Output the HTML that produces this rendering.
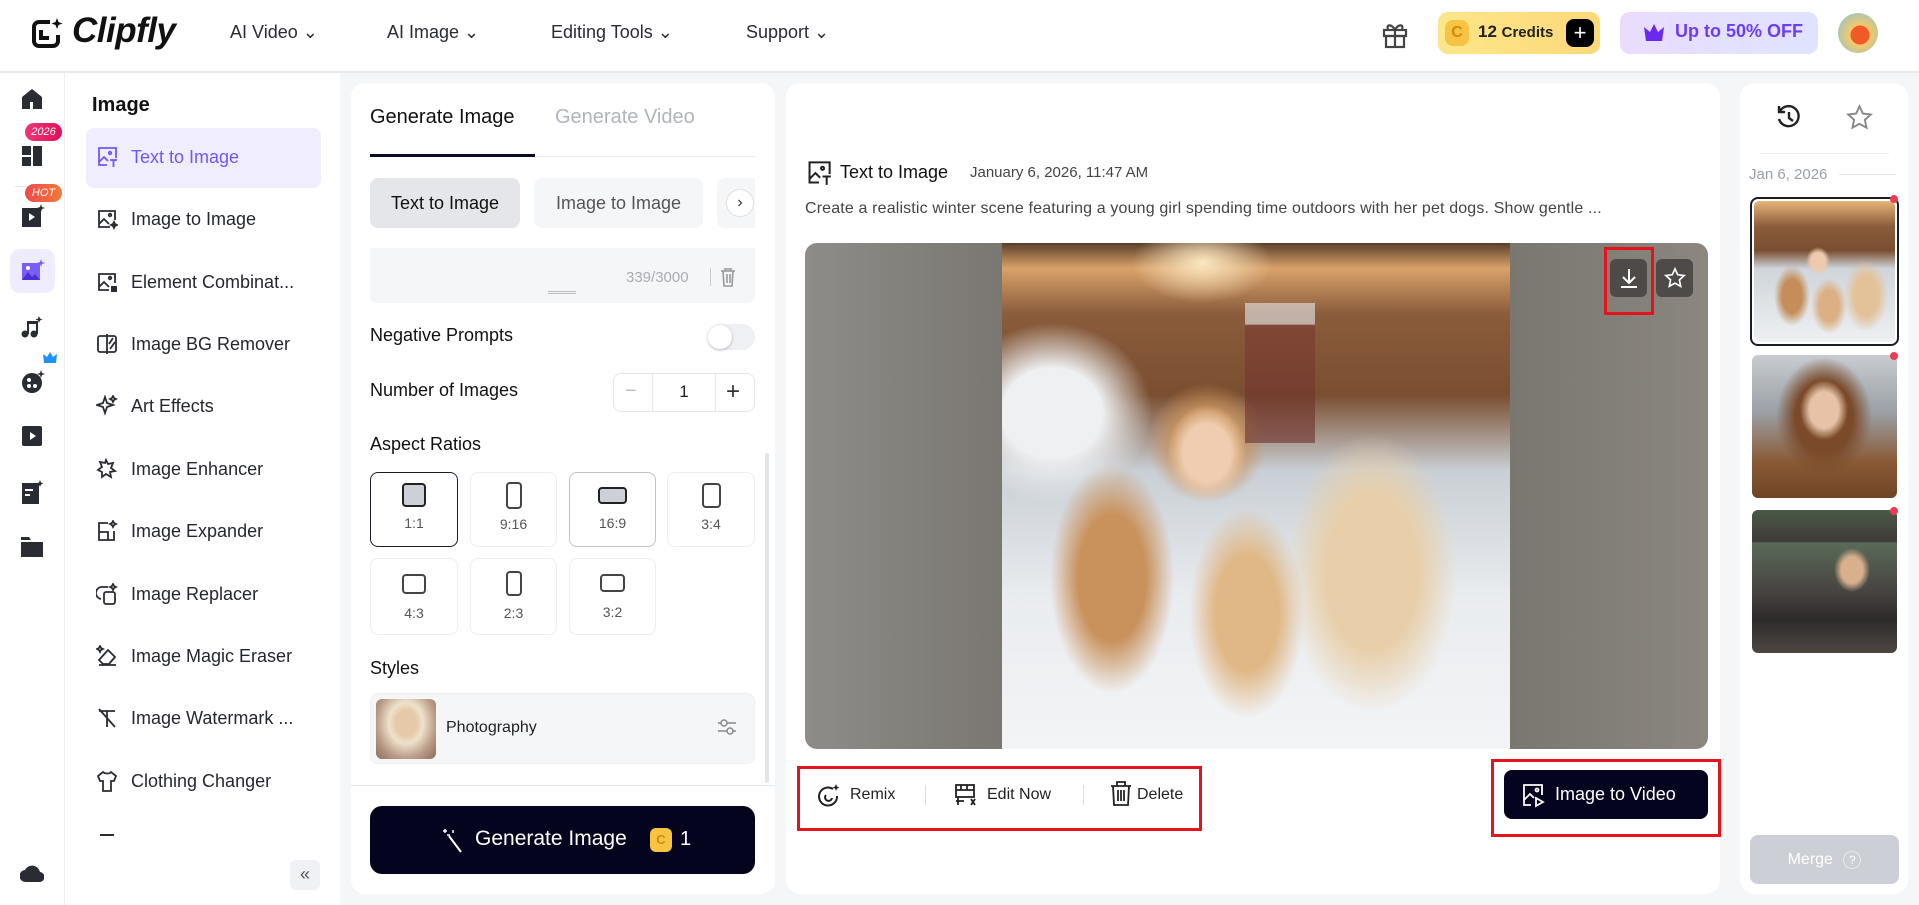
<!DOCTYPE html>
<html><head><meta charset="utf-8"><style>
*{box-sizing:border-box;margin:0;padding:0}
body{width:1919px;height:905px;overflow:hidden;background:#f5f6f8;font-family:"Liberation Sans",sans-serif;color:#1f2129;position:relative}
.a{position:absolute}
.hdr{left:0;top:0;width:1919px;height:73px;background:#fff;border-bottom:2px solid #e8e9ec}
.nav{font-size:18px;color:#2a2c33;top:22px}
.rail{left:0;top:73px;width:65px;height:832px;background:#fff;border-right:1px solid #eceef1}
.side{left:65px;top:73px;width:275px;height:832px;background:#fff}
.it{left:96px;font-size:18px;color:#25272e;display:flex;align-items:center;gap:13px;height:30px}
.it svg{width:22px;height:22px}
.card{background:#fff;border-radius:14px}
.rb{border:1px solid #eceef1;border-radius:8px;background:#fff;display:flex;flex-direction:column;align-items:center;font-size:14px;color:#555}
.red{border:3px solid #e5141c}
</style></head><body>
<div class="a hdr"></div>
<svg class="a" style="left:30px;top:16px" width="34" height="34" viewBox="0 0 34 34"><path d="M20 6H9a5 5 0 0 0-5 5v14a5 5 0 0 0 5 5h14a5 5 0 0 0 5-5v-6" fill="none" stroke="#111" stroke-width="4"/><path d="M11 14v8h8" fill="none" stroke="#111" stroke-width="4"/><path d="M27 2l1.5 4 4 1.5-4 1.5L27 13l-1.5-4-4-1.5 4-1.5z" fill="#111"/></svg>
<div class="a" style="left:72px;top:11px;font-size:35px;font-weight:bold;font-style:italic;color:#111;letter-spacing:-0.5px">Clipfly</div>
<div class="a nav" style="left:230px">AI Video ⌄</div>
<div class="a nav" style="left:387px">AI Image ⌄</div>
<div class="a nav" style="left:551px">Editing Tools ⌄</div>
<div class="a nav" style="left:746px">Support ⌄</div>
<svg class="a" style="left:1380px;top:19px" width="30" height="30" viewBox="0 0 30 30" fill="none" stroke="#444" stroke-width="2.2"><rect x="4" y="11" width="22" height="6"/><rect x="6" y="17" width="18" height="11"/><path d="M15 11v17M15 11c-3-6-9-6-7-1M15 11c3-6 9-6 7-1"/></svg>
<div class="a" style="left:1438px;top:12px;width:162px;height:42px;border-radius:10px;background:linear-gradient(90deg,#fde68a,#fcd97a)"></div>
<div class="a" style="left:1445px;top:20px;width:24px;height:26px;border-radius:8px;background:#f6c342;color:#d08a10;font-weight:bold;font-size:16px;text-align:center;line-height:26px">C</div>
<div class="a" style="left:1478px;top:22px;font-size:17px;color:#222;font-weight:bold">12 <span style="font-size:15px">Credits</span></div>
<div class="a" style="left:1566px;top:19px;width:28px;height:28px;border-radius:8px;background:#000;color:#fff;font-size:22px;text-align:center;line-height:27px">+</div>
<div class="a" style="left:1620px;top:12px;width:198px;height:42px;border-radius:10px;background:linear-gradient(90deg,#eadcff,#dfe3ff)"></div>
<svg class="a" style="left:1642px;top:23px" width="24" height="20" viewBox="0 0 24 20"><path d="M2 4l6 5 4-8 4 8 6-5-2 14H4z" fill="#6d28f0"/></svg>
<div class="a" style="left:1675px;top:21px;font-size:18px;color:#6d3cf4;font-weight:bold">Up to 50% OFF</div>
<div class="a" style="left:1838px;top:13px;width:40px;height:40px;border-radius:50%;background:radial-gradient(circle at 55% 55%,#f05a28 0 30%,#f7c86a 31%,#7cc6d8 100%)"></div>

<div class="a rail"></div>
<svg class="a" style="left:21px;top:88px" width="22" height="22" viewBox="0 0 22 22"><path d="M11 1L1 9v12h20V9z" fill="#2a2c33"/><rect x="9" y="14" width="3" height="7" fill="#fff"/></svg>
<div class="a" style="left:25px;top:123px;width:37px;height:18px;border-radius:9px;background:linear-gradient(90deg,#f0357a,#e0105a);color:#fff;font-size:11px;font-style:italic;text-align:center;line-height:18px">2026</div>
<svg class="a" style="left:22px;top:146px" width="20" height="20" viewBox="0 0 20 20" fill="#2a2c33"><rect x="0" y="0" width="9" height="9"/><rect x="0" y="11" width="9" height="9"/><rect x="11" y="0" width="9" height="20"/></svg>
<div class="a" style="left:15px;top:186px;width:34px;height:1px;background:#e5e5e5"></div>
<div class="a" style="left:25px;top:184px;width:37px;height:18px;border-radius:9px;background:linear-gradient(90deg,#f04a4a,#f07a3a);color:#fff;font-size:11px;font-style:italic;text-align:center;line-height:18px">HOT</div>
<svg class="a" style="left:21px;top:204px" width="24" height="24" viewBox="0 0 24 24"><rect x="1" y="4" width="19" height="19" fill="#2a2c33"/><path d="M8 9l6 4-6 4z" fill="#fff"/><path d="M20 0l1 3 3 1-3 1-1 3-1-3-3-1 3-1z" fill="#2a2c33"/></svg>
<div class="a" style="left:10px;top:249px;width:45px;height:44px;border-radius:10px;background:#efecfd"></div>
<svg class="a" style="left:21px;top:259px" width="24" height="22" viewBox="0 0 24 22"><rect x="1" y="4" width="18" height="17" fill="#7c5cf6"/><path d="M1 21l6-8 4 5 3-3 5 6z" fill="#4a2fd0"/><circle cx="7" cy="9" r="2" fill="#fff"/><path d="M20 0l1 3 3 1-3 1-1 3-1-3-3-1 3-1z" fill="#7c5cf6"/></svg>
<svg class="a" style="left:21px;top:316px" width="22" height="22" viewBox="0 0 22 22" fill="#2a2c33"><circle cx="4" cy="18" r="3.5"/><circle cx="13" cy="18" r="3.5"/><rect x="6" y="5" width="2" height="13"/><rect x="15" y="8" width="2" height="10"/><rect x="6" y="5" width="11" height="3"/><path d="M18 0l1 2.5 2.5 1-2.5 1L18 7l-1-2.5-2.5-1 2.5-1z"/></svg>
<svg class="a" style="left:43px;top:352px" width="14" height="11" viewBox="0 0 14 11"><path d="M0 2l4 3 3-5 3 5 4-3-1 9H1z" fill="#1e90ff"/></svg>
<svg class="a" style="left:21px;top:370px" width="24" height="24" viewBox="0 0 24 24"><circle cx="11" cy="13" r="10" fill="#2a2c33"/><circle cx="8" cy="10" r="2" fill="#fff"/><circle cx="14" cy="16" r="2" fill="#fff"/><circle cx="8" cy="16" r="2" fill="#fff"/><path d="M20 0l1 3 3 1-3 1-1 3-1-3-3-1 3-1z" fill="#2a2c33"/></svg>
<svg class="a" style="left:22px;top:426px" width="20" height="20" viewBox="0 0 20 20"><rect width="20" height="20" rx="2" fill="#2a2c33"/><path d="M8 6l6 4-6 4z" fill="#fff"/></svg>
<svg class="a" style="left:22px;top:480px" width="22" height="24" viewBox="0 0 22 24"><rect x="0" y="3" width="17" height="21" fill="#2a2c33"/><rect x="3" y="9" width="8" height="2" fill="#fff"/><rect x="3" y="14" width="5" height="2" fill="#fff"/><path d="M18 0l1 2.5 2.5 1-2.5 1L18 7l-1-2.5-2.5-1 2.5-1z" fill="#2a2c33"/></svg>
<svg class="a" style="left:21px;top:537px" width="22" height="20" viewBox="0 0 22 20" fill="#2a2c33"><path d="M0 0h8l2 3h-10z"/><rect y="5" width="22" height="15"/></svg>
<svg class="a" style="left:20px;top:861px" width="24" height="22" viewBox="0 0 24 22"><path d="M6 21a6 6 0 0 1-1-12 8 8 0 0 1 15 2 5 5 0 0 1-1 10z" fill="#2a2c33"/></svg>

<div class="a side"></div>
<div class="a" style="left:92px;top:94px;font-size:20px;font-weight:bold;color:#111">Image</div>
<div class="a" style="left:86px;top:128px;width:235px;height:60px;border-radius:8px;background:#f0edfe"></div>
<div class="a it" style="top:142px;color:#7157f5"><svg viewBox="0 0 22 22" fill="none" stroke="#7157f5" stroke-width="1.8"><path d="M13 2H3v17h8M20 12V2h-7"/><path d="M3 16l5-5 4 4"/><circle cx="14" cy="7" r="1.3"/><path d="M14 14h7M17.5 14v7"/></svg>Text to Image</div>
<div class="a it" style="top:204px"><svg viewBox="0 0 22 22" fill="none" stroke="#2a2c33" stroke-width="1.8"><path d="M14 19H3V3h16v9"/><path d="M3 16l5-5 5 5"/><circle cx="14" cy="7" r="1.3"/><path d="M18 14l1 2 2 1-2 1-1 2-1-2-2-1 2-1z" fill="#2a2c33"/></svg>Image to Image</div>
<div class="a it" style="top:267px"><svg viewBox="0 0 22 22" fill="none" stroke="#2a2c33" stroke-width="1.8"><path d="M13 19H3V3h16v9"/><path d="M3 16l5-5 5 5"/><circle cx="14" cy="7" r="1.3"/><rect x="15" y="15" width="6" height="6" fill="#2a2c33" stroke="none"/></svg>Element Combinat...</div>
<div class="a it" style="top:329px"><svg viewBox="0 0 22 22" fill="none" stroke="#2a2c33" stroke-width="1.8"><rect x="2" y="3" width="18" height="16" rx="2"/><path d="M11 1v20M14 16l5-7M13 11l4-6"/></svg>Image BG Remover</div>
<div class="a it" style="top:391px"><svg viewBox="0 0 22 22" fill="none" stroke="#2a2c33" stroke-width="1.8"><path d="M9 2l2 6 6 2-6 2-2 6-2-6-6-2 6-2z"/><path d="M17 1l1 2 2 1-2 1-1 2-1-2-2-1 2-1z"/></svg>Art Effects</div>
<div class="a it" style="top:454px"><svg viewBox="0 0 22 22" fill="none" stroke="#2a2c33" stroke-width="1.8"><path d="M10 2l2 4 5-1-2 5 4 3-5 1 1 5-5-3-4 3v-5L2 12l4-3-2-5 5 1z"/></svg>Image Enhancer</div>
<div class="a it" style="top:516px"><svg viewBox="0 0 22 22" fill="none" stroke="#2a2c33" stroke-width="1.8"><path d="M12 3H3v17h15v-9"/><path d="M3 12h9v8"/><path d="M17 1l1 2 2 1-2 1-1 2-1-2-2-1 2-1z"/></svg>Image Expander</div>
<div class="a it" style="top:579px"><svg viewBox="0 0 22 22" fill="none" stroke="#2a2c33" stroke-width="1.8"><rect x="8" y="9" width="11" height="12" rx="2"/><path d="M5 16a6 6 0 0 1 2-12h5"/><path d="M17 1l1 2 2 1-2 1-1 2-1-2-2-1 2-1z"/></svg>Image Replacer</div>
<div class="a it" style="top:641px"><svg viewBox="0 0 22 22" fill="none" stroke="#2a2c33" stroke-width="1.8"><path d="M12 5l7 7-6 7H7l-4-4z"/><path d="M3 20h17"/><path d="M4 1l1 2 2 1-2 1-1 2-1-2-2-1 2-1z"/></svg>Image Magic Eraser</div>
<div class="a it" style="top:703px"><svg viewBox="0 0 22 22" fill="none" stroke="#2a2c33" stroke-width="1.8"><path d="M3 4h16M11 4v16M3 2l16 18"/></svg>Image Watermark ...</div>
<div class="a it" style="top:766px"><svg viewBox="0 0 22 22" fill="none" stroke="#2a2c33" stroke-width="1.8"><path d="M7 2l-5 4 2 5h3v10h8V11h3l2-5-5-4c-1 2-6 2-8 0z"/></svg>Clothing Changer</div>
<div class="a" style="left:100px;top:834px;width:14px;height:2px;background:#2a2c33"></div>
<div class="a" style="left:290px;top:860px;width:30px;height:30px;border-radius:6px;background:#f0f1f4;color:#555;font-size:18px;text-align:center;line-height:28px">«</div>

<div class="a card" style="left:351px;top:83px;width:424px;height:811px"></div>
<div class="a" style="left:370px;top:106px;font-size:20px;color:#111">Generate Image</div>
<div class="a" style="left:555px;top:106px;font-size:20px;color:#b0b4be">Generate Video</div>
<div class="a" style="left:370px;top:156px;width:385px;height:1px;background:#eceef1"></div>
<div class="a" style="left:370px;top:154px;width:165px;height:3px;background:#0b0a26"></div>
<div class="a" style="left:370px;top:178px;width:150px;height:50px;border-radius:8px;background:#e5e6ea;font-size:18px;color:#111;text-align:center;line-height:50px">Text to Image</div>
<div class="a" style="left:534px;top:178px;width:169px;height:50px;border-radius:8px;background:#f5f6f8;font-size:18px;color:#555;text-align:center;line-height:50px">Image to Image</div>
<div class="a" style="left:717px;top:178px;width:38px;height:50px;border-radius:8px 0 0 8px;background:#f5f6f8"></div>
<div class="a" style="left:726px;top:189px;width:28px;height:28px;border-radius:50%;background:#fff;border:1px solid #e0e0e0;text-align:center;line-height:26px;color:#333">›</div>
<div class="a" style="left:370px;top:248px;width:385px;height:55px;border-radius:0 0 8px 8px;background:#f5f6f8"></div>
<div class="a" style="left:626px;top:269px;font-size:15px;color:#a8acb4">339/3000</div>
<div class="a" style="left:710px;top:268px;width:1px;height:18px;background:#ccc"></div>
<svg class="a" style="left:720px;top:268px" width="16" height="19" viewBox="0 0 16 19" fill="none" stroke="#999" stroke-width="1.6"><path d="M1 3h14M5 3V1h6v2M3 3l1 15h8l1-15M7 6v9M10 6v9"/></svg>
<div class="a" style="left:548px;top:291px;width:28px;height:3px;border-top:1px solid #bbb;border-bottom:1px solid #bbb"></div>
<div class="a" style="left:370px;top:325px;font-size:18px;color:#111">Negative Prompts</div>
<div class="a" style="left:708px;top:324px;width:47px;height:26px;border-radius:13px;background:#eef0f3"></div>
<div class="a" style="left:708px;top:325px;width:24px;height:24px;border-radius:50%;background:#fff;box-shadow:0 1px 3px rgba(0,0,0,.25)"></div>
<div class="a" style="left:370px;top:380px;font-size:18px;color:#111">Number of Images</div>
<div class="a" style="left:613px;top:373px;width:142px;height:39px;border:1px solid #e5e6ea;border-radius:8px"></div>
<div class="a" style="left:652px;top:373px;width:64px;height:39px;border-left:1px solid #e5e6ea;border-right:1px solid #e5e6ea;text-align:center;line-height:38px;font-size:17px">1</div>
<div class="a" style="left:625px;top:380px;font-size:20px;color:#bbb">−</div>
<div class="a" style="left:726px;top:378px;font-size:24px;color:#333">+</div>
<div class="a" style="left:370px;top:434px;font-size:18px;color:#111">Aspect Ratios</div>
<div class="a rb" style="left:370px;top:472px;width:88px;height:75px;border:1.5px solid #1b1b2a"><div style="width:24px;height:24px;border:2px solid #222;border-radius:4px;background:#cdd0d7;margin:10px 0 8px"></div>1:1</div>
<div class="a rb" style="left:470px;top:472px;width:87px;height:75px"><div style="width:16px;height:27px;border:2px solid #444;border-radius:4px;margin:9px 0 7px"></div>9:16</div>
<div class="a rb" style="left:569px;top:472px;width:87px;height:75px;border-color:#bfc2c9"><div style="width:29px;height:17px;border:2px solid #222;border-radius:4px;background:#cdd0d7;margin:14px 0 11px"></div>16:9</div>
<div class="a rb" style="left:667px;top:472px;width:88px;height:75px"><div style="width:19px;height:25px;border:2px solid #444;border-radius:4px;margin:10px 0 8px"></div>3:4</div>
<div class="a rb" style="left:370px;top:558px;width:88px;height:77px"><div style="width:24px;height:20px;border:2px solid #444;border-radius:4px;margin:15px 0 11px"></div>4:3</div>
<div class="a rb" style="left:470px;top:558px;width:87px;height:77px"><div style="width:16px;height:25px;border:2px solid #444;border-radius:4px;margin:12px 0 9px"></div>2:3</div>
<div class="a rb" style="left:569px;top:558px;width:87px;height:77px"><div style="width:25px;height:18px;border:2px solid #444;border-radius:4px;margin:15px 0 12px"></div>3:2</div>
<div class="a" style="left:765px;top:453px;width:4px;height:330px;border-radius:2px;background:#e3e5e9"></div>
<div class="a" style="left:370px;top:658px;font-size:18px;color:#111">Styles</div>
<div class="a" style="left:370px;top:693px;width:385px;height:71px;border-radius:8px;background:#f5f6f8;border:1px solid #eef0f2"></div>
<div class="a" style="left:376px;top:699px;width:60px;height:60px;border-radius:6px;background:radial-gradient(ellipse at 50% 40%,#e6c9a8 0 25%,#efe2cc 40%,#b89a86 70%,#8b6a5a)"></div>
<div class="a" style="left:446px;top:719px;font-size:16px;color:#222">Photography</div>
<svg class="a" style="left:716px;top:716px" width="22" height="22" viewBox="0 0 22 22" fill="none" stroke="#888" stroke-width="1.5"><path d="M2 7h18M2 15h18"/><circle cx="8" cy="7" r="3" fill="#f5f6f8"/><circle cx="14" cy="15" r="3" fill="#f5f6f8"/></svg>
<div class="a" style="left:351px;top:785px;width:424px;height:1px;background:#e5e6ea"></div>
<div class="a" style="left:370px;top:806px;width:385px;height:68px;border-radius:12px;background:#05041e"></div>
<svg class="a" style="left:441px;top:828px" width="24" height="26" viewBox="0 0 24 26" fill="none" stroke="#fff" stroke-width="2"><path d="M8 8l12 16"/><path d="M4 1v4M2 3h4M12 2v3M9 7H6" stroke-width="1.5"/></svg>
<div class="a" style="left:475px;top:827px;font-size:21px;color:#fff">Generate Image</div>
<div class="a" style="left:650px;top:828px;width:22px;height:24px;border-radius:6px;background:#f6c342;color:#d08a10;font-size:13px;font-weight:bold;text-align:center;line-height:24px">C</div>
<div class="a" style="left:680px;top:828px;font-size:20px;color:#fff">1</div>

<div class="a card" style="left:786px;top:83px;width:934px;height:811px"></div>
<svg class="a" style="left:806px;top:160px" width="26" height="26" viewBox="0 0 22 22" fill="none" stroke="#222" stroke-width="1.7"><path d="M13 2H3v17h8M20 12V2h-7"/><path d="M3 16l5-5 4 4"/><circle cx="14" cy="7" r="1.3"/><path d="M14 14h7M17.5 14v7"/></svg>
<div class="a" style="left:840px;top:162px;font-size:18px;color:#111">Text to Image</div>
<div class="a" style="left:970px;top:164px;font-size:15px;color:#444">January 6, 2026, 11:47 AM</div>
<div class="a" style="left:805px;top:200px;font-size:16px;color:#444;letter-spacing:0.15px;white-space:nowrap">Create a realistic winter scene featuring a young girl spending time outdoors with her pet dogs. Show gentle ...</div>
<div class="a" style="left:805px;top:243px;width:903px;height:506px;border-radius:12px;overflow:hidden;background:linear-gradient(90deg,#8e8c88,#7a7772 22%,#7a7670 78%,#8b8780)">
 <div class="a" style="left:197px;top:0;width:508px;height:506px;background:
 radial-gradient(ellipse 70px 40px at 200px 20px,#fbe7c0,transparent 100%),
 radial-gradient(ellipse 40px 48px at 205px 210px,#f0cdb0 0 60%,transparent 100%),
 radial-gradient(ellipse 60px 60px at 205px 200px,#c9935c 0 50%,transparent 100%),
 radial-gradient(ellipse 62px 115px at 110px 335px,#c9925c 0 55%,transparent 100%),
 radial-gradient(ellipse 58px 105px at 245px 370px,#e0b886 0 55%,transparent 100%),
 radial-gradient(ellipse 85px 140px at 370px 330px,#e8cfaa 0 55%,transparent 100%),
 radial-gradient(ellipse 100px 90px at 50px 170px,#eef0f2 0 50%,transparent 100%),
 linear-gradient(180deg,#5a3e2a 0%,#d9a26a 5%,#8a5c3c 14%,#7a4e30 30%,#c9cfd5 45%,#e9ecef 70%,#f3f4f6 100%)"></div>
 <div class="a" style="left:440px;top:60px;width:70px;height:140px;background:linear-gradient(180deg,#e8eaec 0 15%,#7d3a32 16%,#6b2f2a 100%);opacity:.6"></div>
</div>
<div class="a" style="left:1610px;top:259px;width:37px;height:38px;border-radius:6px;background:#4e4a47"></div>
<svg class="a" style="left:1618px;top:267px" width="22" height="22" viewBox="0 0 22 22" fill="none" stroke="#fff" stroke-width="2"><path d="M11 2v13M5 10l6 6 6-6M3 20h16"/></svg>
<div class="a red" style="left:1604px;top:247px;width:50px;height:68px"></div>
<div class="a" style="left:1656px;top:259px;width:37px;height:38px;border-radius:6px;background:#4e4a47"></div>
<svg class="a" style="left:1664px;top:267px" width="22" height="22" viewBox="0 0 24 24" fill="none" stroke="#fff" stroke-width="1.8"><path d="M12 2l3 6.5 7 .8-5.2 4.8 1.4 7L12 17.6 5.8 21l1.4-7L2 9.3l7-.8z"/></svg>
<div class="a red" style="left:797px;top:766px;width:405px;height:65px"></div>
<svg class="a" style="left:817px;top:783px" width="24" height="26" viewBox="0 0 24 26" fill="none" stroke="#222" stroke-width="2"><path d="M16 6a9 9 0 1 0 4 7"/><path d="M9 12a3.5 3.5 0 1 0 6 3"/><path d="M19 1l1 2.5 2.5 1-2.5 1L19 8l-1-2.5-2.5-1 2.5-1z" fill="#222" stroke="none"/></svg>
<div class="a" style="left:850px;top:786px;font-size:16px;color:#222">Remix</div>
<div class="a" style="left:925px;top:785px;width:1px;height:20px;background:#ddd"></div>
<svg class="a" style="left:954px;top:783px" width="24" height="24" viewBox="0 0 24 24" fill="none" stroke="#222" stroke-width="1.8"><rect x="2" y="2" width="18" height="12"/><path d="M2 7h18M7 2v5M13 2v5M2 18h8M4 14v8M17 16l4 6M21 16l-4 6"/></svg>
<div class="a" style="left:987px;top:786px;font-size:16px;color:#222">Edit Now</div>
<div class="a" style="left:1083px;top:785px;width:1px;height:20px;background:#ddd"></div>
<svg class="a" style="left:1110px;top:781px" width="22" height="26" viewBox="0 0 22 26" fill="none" stroke="#222" stroke-width="1.8"><path d="M1 5h20M7 5V1h8v4M3 5l1 19h14l1-19M8 9v11M11 9v11M14 9v11"/></svg>
<div class="a" style="left:1137px;top:786px;font-size:16px;color:#222">Delete</div>
<div class="a red" style="left:1491px;top:759px;width:230px;height:78px"></div>
<div class="a" style="left:1504px;top:770px;width:204px;height:49px;border-radius:8px;background:#05041e"></div>
<svg class="a" style="left:1521px;top:782px" width="26" height="26" viewBox="0 0 26 26" fill="none" stroke="#fff" stroke-width="1.8"><path d="M10 23H3V3h18v10"/><path d="M3 18l6-6 4 4"/><circle cx="16" cy="8" r="1.5"/><path d="M15 16v8l7-4z"/></svg>
<div class="a" style="left:1555px;top:784px;font-size:18px;color:#fff">Image to Video</div>

<div class="a card" style="left:1740px;top:83px;width:168px;height:811px"></div>
<svg class="a" style="left:1776px;top:104px" width="26" height="26" viewBox="0 0 26 26" fill="none" stroke="#222" stroke-width="2.4"><path d="M4 7a10 10 0 1 1-1 8"/><path d="M3 2v6h6"/><path d="M13 8v6l4 3"/></svg>
<svg class="a" style="left:1846px;top:104px" width="27" height="27" viewBox="0 0 24 24" fill="none" stroke="#888" stroke-width="1.7"><path d="M12 2l3 6.5 7 .8-5.2 4.8 1.4 7L12 17.6 5.8 21l1.4-7L2 9.3l7-.8z"/></svg>
<div class="a" style="left:1760px;top:153px;width:129px;height:1px;background:#eceef1"></div>
<div class="a" style="left:1749px;top:166px;font-size:15px;color:#9a9ea6">Jan 6, 2026</div>
<div class="a" style="left:1839px;top:174px;width:57px;height:1px;background:#e3e5e9"></div>
<div class="a" style="left:1750px;top:197px;width:149px;height:149px;border:2px solid #1b1b2a;border-radius:8px;padding:2px"><div style="width:100%;height:100%;border-radius:5px;background:
 radial-gradient(ellipse 18px 30px at 38px 95px,#c48d5a 0 55%,transparent 100%),
 radial-gradient(ellipse 18px 28px at 75px 105px,#dcb084 0 55%,transparent 100%),
 radial-gradient(ellipse 22px 36px at 112px 95px,#e3c29a 0 55%,transparent 100%),
 radial-gradient(ellipse 12px 14px at 64px 60px,#efcbad 0 60%,transparent 100%),
 linear-gradient(180deg,#e8b577 0%,#8a5c3c 18%,#7a4e30 35%,#cfd5db 48%,#eef0f2 100%)"></div></div>
<div class="a" style="left:1752px;top:355px;width:145px;height:143px;border-radius:6px;background:radial-gradient(ellipse 24px 30px at 72px 55px,#e7c2a6 0 60%,transparent 100%),radial-gradient(ellipse 48px 60px at 72px 62px,#7a4a2a 0 60%,transparent 100%),linear-gradient(180deg,#c8ccd0,#9aa0a6 40%,#8a5a35 75%,#6e4425)"></div>
<div class="a" style="left:1752px;top:510px;width:145px;height:143px;border-radius:6px;background:radial-gradient(ellipse 18px 22px at 100px 60px,#d9b08c 0 60%,transparent 100%),linear-gradient(180deg,#4a5a48 0,#3f3a38 22%,#5a6a58 23%,#44403e 60%,#2d2a2a 76%,#4d4742 100%)"></div>
<div class="a" style="left:1890px;top:195px;width:8px;height:8px;border-radius:50%;background:#ef3b52"></div>
<div class="a" style="left:1890px;top:352px;width:8px;height:8px;border-radius:50%;background:#ef3b52"></div>
<div class="a" style="left:1890px;top:507px;width:8px;height:8px;border-radius:50%;background:#ef3b52"></div>
<div class="a" style="left:1750px;top:835px;width:149px;height:49px;border-radius:8px;background:#ccd0d6;color:#fff;font-size:16px;text-align:center;line-height:49px">Merge <span style="display:inline-block;width:18px;height:18px;border:1px solid #e6e8eb;border-radius:50%;font-size:12px;line-height:16px;vertical-align:middle;margin-left:6px">?</span></div>
</body></html>
